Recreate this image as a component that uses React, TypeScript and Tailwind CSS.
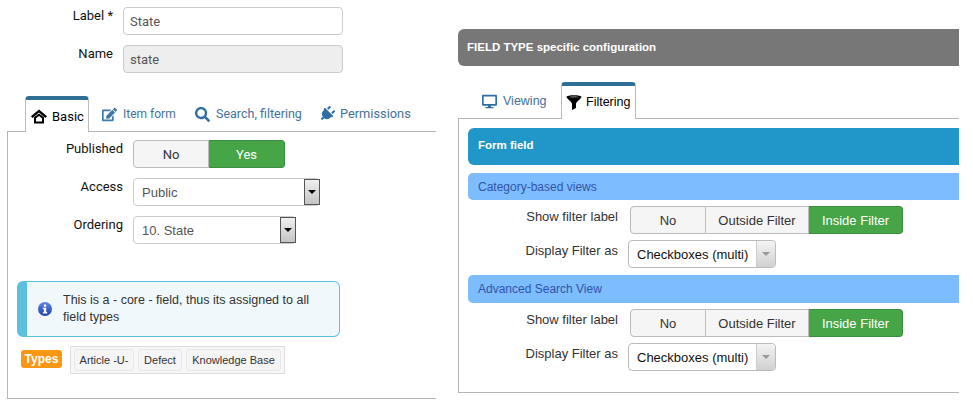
import { FaDesktop, FaEdit, FaPlug, FaSearch } from "react-icons/fa";

const labelFont = "font-['Roboto',sans-serif]";

const HomeIcon = () => (
  <svg viewBox="0 0 16 15" className="h-[15px] w-[16px] shrink-0">
    <path d="M8 0.5 L16 7.2 L14.4 8.9 L8 3.6 L1.6 8.9 L0 7.2 Z" fill="#000" />
    <path d="M3 8.2 L8 4.4 L13 8.2 V14.5 H3 Z M5 9.2 V12.6 H11 V9.2 L8 7 Z" fill="#000" fillRule="evenodd" />
  </svg>
);

const FunnelIcon = () => (
  <svg viewBox="0 0 16 15" className="h-[15px] w-[16px] shrink-0">
    <path d="M0.5 1.8 C0.5 -0.4 15.5 -0.4 15.5 1.8 C15.5 3.6 10.2 6.6 10 9 V13 L6 15 V9 C5.8 6.6 0.5 3.6 0.5 1.8 Z" fill="#000" />
    <path d="M3 1.9 C5 1 11 1 13 1.9 C11 2.7 5 2.7 3 1.9 Z" fill="#777" />
  </svg>
);

const InfoIcon = () => (
  <svg viewBox="0 0 14 14" className="h-[14px] w-[14px] shrink-0">
    <defs>
      <linearGradient id="infoFill" x1="0" y1="0" x2="0" y2="1">
        <stop offset="0" stopColor="#5f86e8" />
        <stop offset="1" stopColor="#1f3fae" />
      </linearGradient>
    </defs>
    <circle cx="7" cy="7" r="7" fill="url(#infoFill)" />
    <rect x="5.9" y="2.5" width="2.3" height="2.2" fill="#fff" />
    <path d="M4.9 5.8 H8.2 V10 H9.2 V11.4 H4.9 V10 H5.9 V7.2 H4.9 Z" fill="#fff" />
  </svg>
);

const Arrow = ({ color = "border-t-black" }: { color?: string }) => (
  <span className={`h-0 w-0 border-x-[4px] border-t-[4px] border-x-transparent ${color}`} />
);

const FormRow = ({ label, children, top = "" }: { label: string; children: React.ReactNode; top?: string }) => (
  <div className={`flex ${top}`}>
    <div className={`w-[115px] pt-[1px] text-right text-[13px] leading-[16px] text-[#111] ${labelFont}`}>{label}</div>
    <div className="ml-[10px]">{children}</div>
  </div>
);

const OldSelect = ({ value, width }: { value: string; width: string }) => (
  <div className={`flex h-[28px] items-center justify-between rounded-[4px] border border-[#ccc] bg-white pl-[8px] text-[13px] text-[#555] ${width}`}>
    <span className="pt-[2px]">{value}</span>
    <span className="-mr-px flex h-[26px] w-[16px] items-center justify-center border border-[#555] bg-gradient-to-b from-[#f0f0f0] to-[#c4c4c4]">
      <Arrow />
    </span>
  </div>
);

const Segments = ({ items }: { items: { text: string; width: string; on?: boolean }[] }) => (
  <div className="flex h-[28px] text-[13px]">
    {items.map((item, i) => (
      <div
        key={item.text}
        className={`flex items-center justify-center border ${item.width} ${
          item.on ? "border-[#3a8f3f] bg-[#46a546] text-white" : "border-[#bbb] bg-[#f5f5f5] text-[#333]"
        } ${i === 0 ? "rounded-l-[4px]" : "border-l-0"} ${i === items.length - 1 ? "rounded-r-[4px]" : ""}`}
      >
        <span className="pt-[1px]">{item.text}</span>
      </div>
    ))}
  </div>
);

const filterOptions = [
  { text: "No", width: "w-[76px]" },
  { text: "Outside Filter", width: "w-[103px]" },
  { text: "Inside Filter", width: "w-[94px]", on: true },
];

const FilterRows = () => (
  <div className="flex flex-col">
    <div className="flex h-[28px]">
      <div className="w-[150px] pt-[3px] text-right text-[13px] leading-[16px] text-[#333]">Show filter label</div>
      <div className="ml-[12px]">
        <Segments items={filterOptions} />
      </div>
    </div>
    <div className="mt-[6px] flex h-[28px]">
      <div className="w-[150px] pt-[3px] text-right text-[13px] leading-[16px] text-[#333]">Display Filter as</div>
      <div className="ml-[10px] flex h-[28px] w-[148px] items-center justify-between rounded-[4px] border border-[#bbb] bg-white pl-[8px] text-[13px] text-[#111]">
        <span className="pt-[1px]">Checkboxes (multi)</span>
        <span className="flex h-[26px] w-[19px] items-center justify-center rounded-r-[4px] border-l border-[#ccc] bg-gradient-to-b from-[#f4f4f4] to-[#d0d0d0]">
          <Arrow color="border-t-[#999]" />
        </span>
      </div>
    </div>
  </div>
);

const SubHeader = ({ title, height }: { title: string; height: string }) => (
  <div className={`flex items-center rounded-l-[5px] bg-[#7dbcff] pl-[10px] text-[12px] text-[#2f55a8] ${height}`}>{title}</div>
);

export default function App() {
  return (
    <div className="flex h-[405px] w-[973px] overflow-hidden bg-white font-['Liberation_Sans',sans-serif]">
      {/* Left column */}
      <div className="w-[436px] pt-[7px]">
        <div className="flex">
          <div className={`w-[113px] pt-[1px] text-right text-[13px] leading-[16px] text-[#111] ${labelFont}`}>Label *</div>
          <div className={`ml-[10px] flex h-[28px] w-[220px] items-center rounded-[4px] border border-[#ccc] bg-white pl-[6px] pt-[2px] text-[13px] text-[#555] ${labelFont}`}>State</div>
        </div>
        <div className="mt-[10px] flex">
          <div className={`w-[113px] pt-[1px] text-right text-[13px] leading-[16px] text-[#111] ${labelFont}`}>Name</div>
          <div className={`ml-[10px] flex h-[28px] w-[220px] items-center rounded-[4px] border border-[#ccc] bg-[#eee] pl-[6px] pt-[2px] text-[13px] text-[#555] ${labelFont}`}>state</div>
        </div>

        <div className={`ml-[25px] mt-[23px] flex h-[36px] items-end text-[12.5px] ${labelFont}`}>
          <div className="relative z-10 flex h-[36px] w-[64px] items-center gap-[5px] rounded-t-[4px] border border-b-0 border-x-[#bbb] border-t-[4px] border-t-[#2f6f94] bg-white pl-[5px] pt-[1px] text-[13px] text-black">
            <HomeIcon />
            Basic
          </div>
          <div className="ml-[13px] flex h-[36px] w-[93px] items-center gap-[6px] text-[12px] text-[#44719c]">
            <FaEdit className="h-[15px] w-[15px] text-[#3b79ad]" />
            Item form
          </div>
          <div className="flex h-[36px] w-[124px] items-center gap-[6px] text-[#44719c]">
            <FaSearch className="h-[15px] w-[15px] text-[#2f6ea5]" />
            Search, filtering
          </div>
          <div className="flex h-[36px] items-center gap-[5px] text-[12.8px] text-[#44719c]">
            <FaPlug className="h-[16px] w-[16px] rotate-45 text-[#2f6ea5]" />
            Permissions
          </div>
        </div>

        <div className="-mt-px ml-[7px] h-[268px] border-b border-l border-t border-[#b5b5b5] pt-[8px]">
          <FormRow label="Published">
            <div className={labelFont}>
              <Segments
                items={[
                  { text: "No", width: "w-[76px]" },
                  { text: "Yes", width: "w-[76px]", on: true },
                ]}
              />
            </div>
          </FormRow>
          <FormRow label="Access" top="mt-[10px]">
            <OldSelect value="Public" width="w-[187px]" />
          </FormRow>
          <FormRow label="Ordering" top="mt-[10px]">
            <OldSelect value="10. State" width="w-[163px]" />
          </FormRow>

          <div className="ml-[9px] mt-[37px] flex h-[56px] w-[323px] items-center rounded-[6px] border border-[#5bc0de] border-l-[10px] bg-[#f0f8fc] pl-[11px] text-[12.5px] leading-[17px] text-[#333]">
            <InfoIcon />
            <div className="ml-[11px] w-[250px]">This is a - core - field, thus its assigned to all field types</div>
          </div>

          <div className="ml-[13px] mt-[9px] flex">
            <span className="mt-[4px] flex h-[18px] w-[41px] items-center justify-center rounded-[3px] bg-[#fb9712] text-[12px] font-bold text-white">Types</span>
            <div className="ml-[8px] flex h-[28px] items-center gap-[4px] border border-[#ddd] bg-[#f7f7f7] px-[3px] text-[11px] text-[#333]">
              <span className="flex h-[22px] w-[60px] items-center justify-center rounded-[3px] border border-[#e8e8e8] bg-[#f5f5f5]">Article -U-</span>
              <span className="flex h-[22px] w-[44px] items-center justify-center rounded-[3px] border border-[#e8e8e8] bg-[#f5f5f5]">Defect</span>
              <span className="flex h-[22px] w-[95px] items-center justify-center rounded-[3px] border border-[#e8e8e8] bg-[#f5f5f5]">Knowledge Base</span>
            </div>
          </div>
        </div>
      </div>

      {/* Right column */}
      <div className="ml-[22px] w-[501px] pt-[29px]">
        <div className="flex h-[37px] items-center rounded-l-[6px] bg-[#777] pl-[9px] text-[11.5px] font-bold text-white">FIELD TYPE specific configuration</div>

        <div className="ml-[23px] mt-[16px] flex h-[37px] items-end text-[12.5px]">
          <div className="flex h-[36px] w-[80px] items-center gap-[6px] pl-[1px] pt-[1px] text-[#44719c]">
            <FaDesktop className="h-[15px] w-[15px] text-[#2f6ea5]" />
            Viewing
          </div>
          <div className="relative z-10 flex h-[37px] w-[75px] items-center gap-[4px] rounded-t-[4px] border border-b-0 border-x-[#bbb] border-t-[4px] border-t-[#2f6f94] bg-white pl-[4px] text-black">
            <FunnelIcon />
            Filtering
          </div>
        </div>

        <div className="-mt-px h-[275px] border-b border-l border-t border-[#b5b5b5] pl-[9px] pt-[9px]">
          <div className="flex h-[37px] items-center rounded-l-[6px] bg-[#2196c9] pb-[1px] pl-[10px] text-[11.5px] font-bold text-white">Form field</div>
          <div className="mt-[8px]">
            <SubHeader title="Category-based views" height="h-[27px]" />
          </div>
          <div className="mt-[6px]">
            <FilterRows />
          </div>
          <div className="mt-[7px]">
            <SubHeader title="Advanced Search View" height="h-[28px]" />
          </div>
          <div className="mt-[6px]">
            <FilterRows />
          </div>
        </div>
      </div>
    </div>
  );
}
